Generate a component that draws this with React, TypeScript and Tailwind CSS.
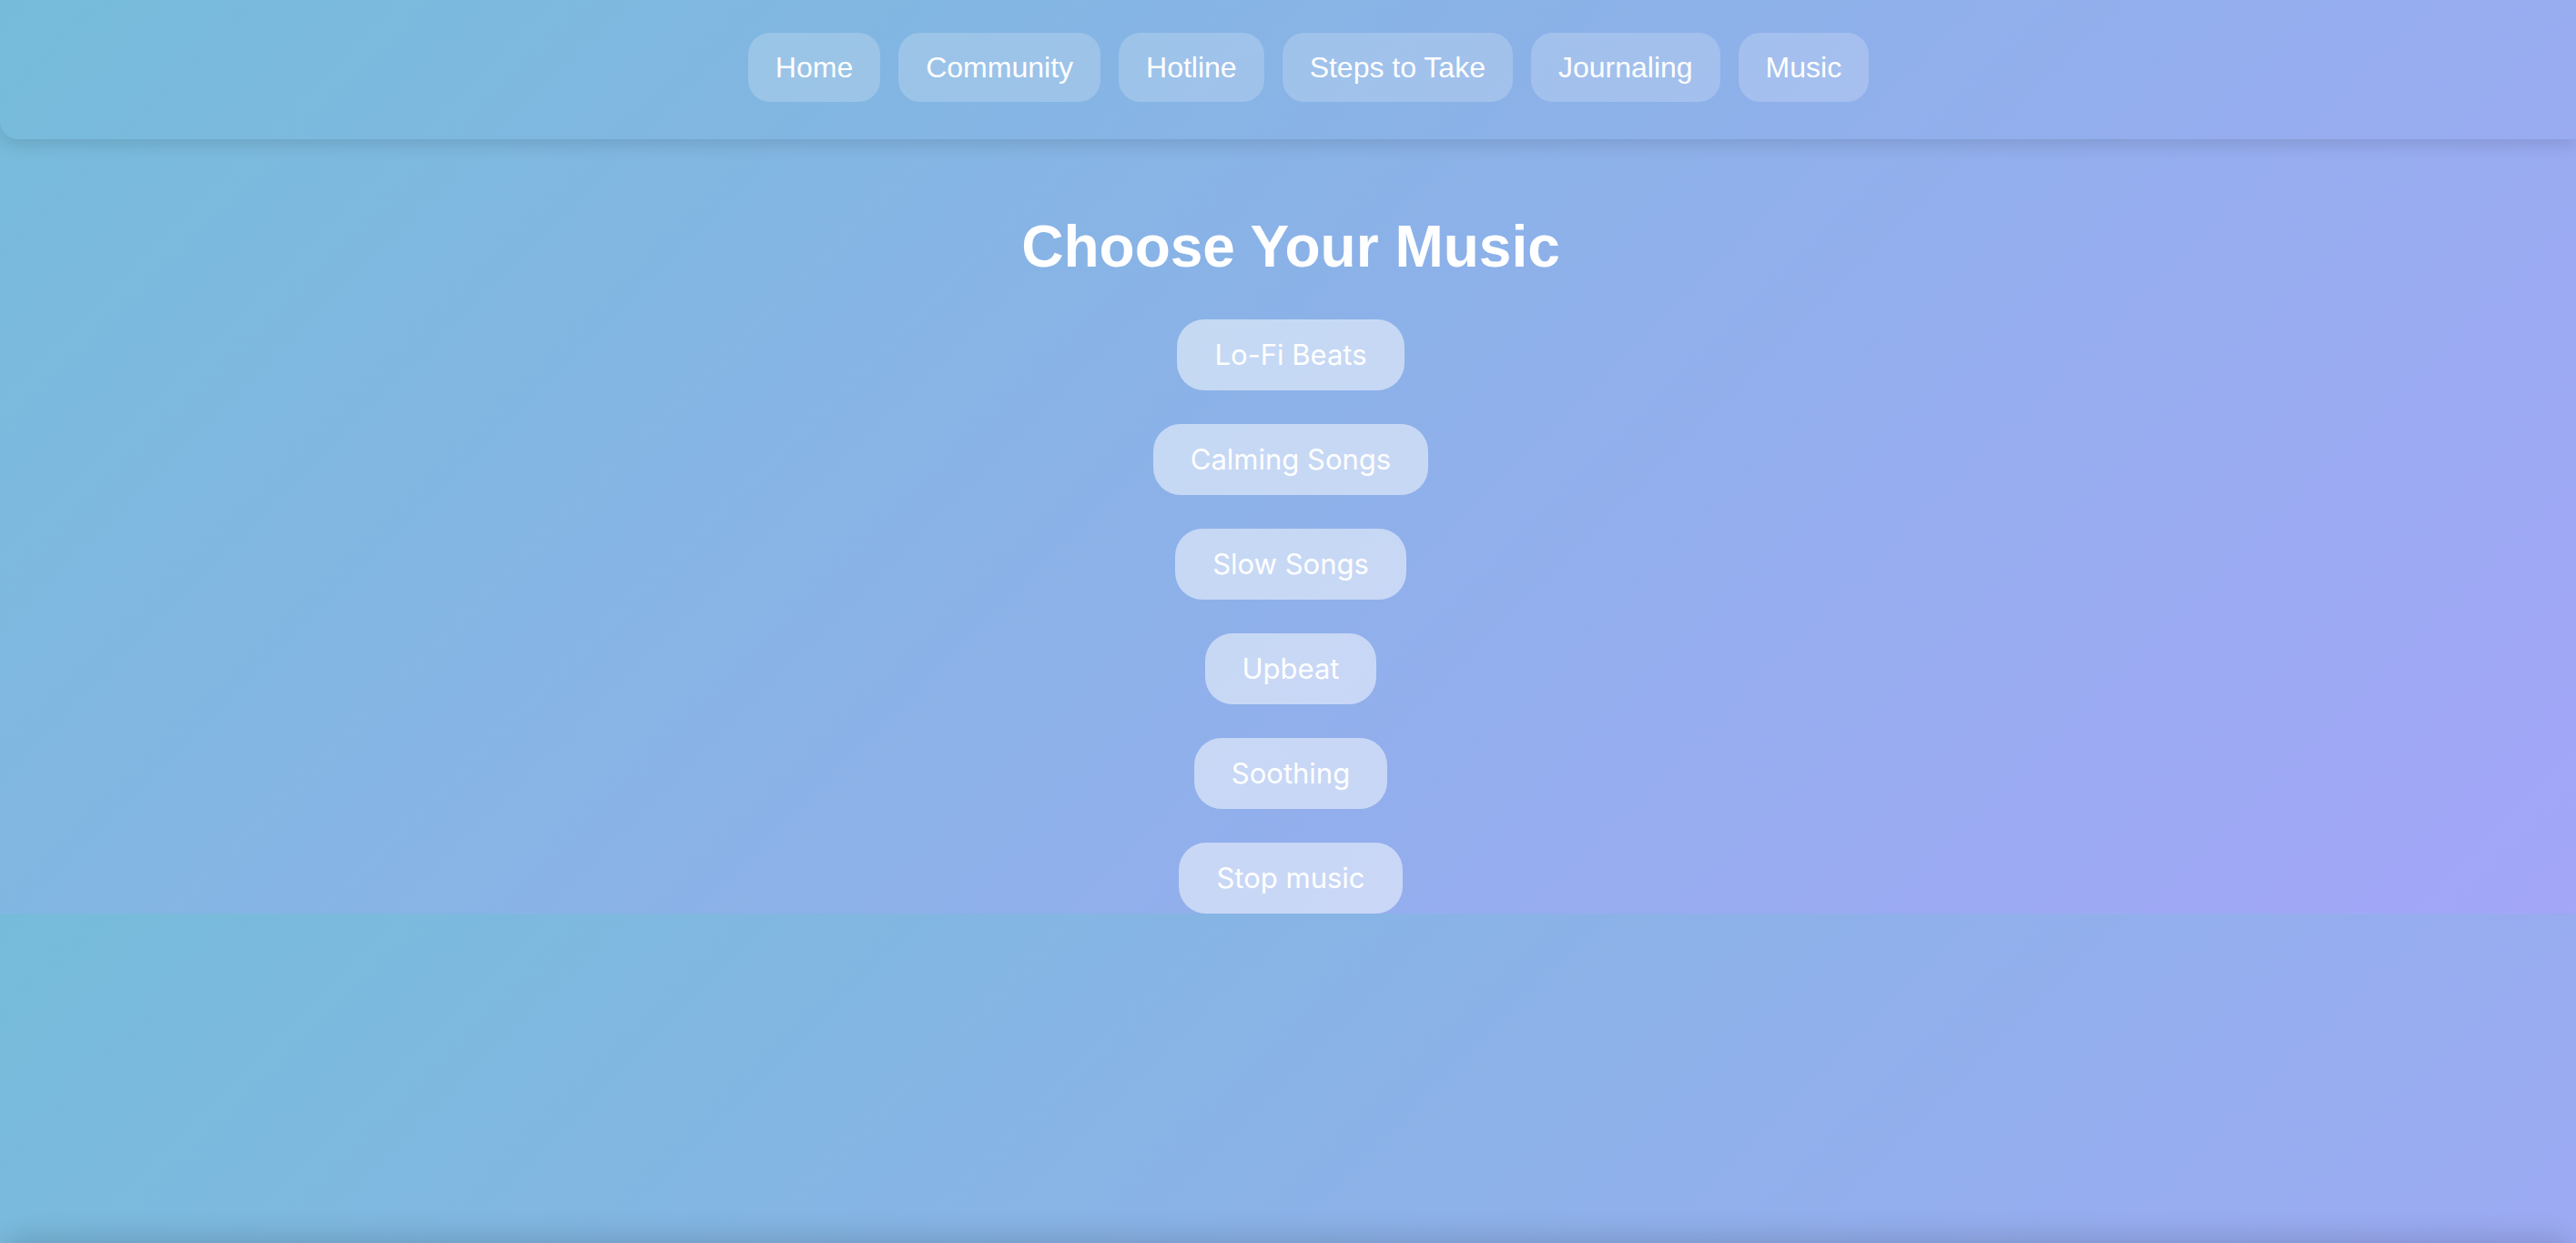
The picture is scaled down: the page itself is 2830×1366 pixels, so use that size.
import React from 'react';

const navItems = ['Home', 'Community', 'Hotline', 'Steps to Take', 'Journaling', 'Music'];
const tracks = ['Lo-Fi Beats', 'Calming Songs', 'Slow Songs', 'Upbeat', 'Soothing', 'Stop music'];

export default function App() {
  return (
    <div className="relative flex h-[1366px] flex-col overflow-hidden bg-[linear-gradient(135deg,#76bcda,#a4a6f8)] bg-[length:100%_1004px] bg-repeat font-['Liberation_Sans',Arial,sans-serif] text-white">
      {/* Header / nav */}
      <header className="rounded-bl-[20px] pt-[36px] pb-[41px] shadow-[0_6px_18px_rgba(0,0,0,0.12)]">
        <ul className="flex justify-center gap-[20px] pl-[45px]">
          {navItems.map(item => (
            <li key={item}>
              <a className="block rounded-[24px] bg-white/20 px-[30px] py-[20px] text-[32px] leading-[36px]">{item}</a>
            </li>
          ))}
        </ul>
      </header>

      {/* Music chooser */}
      <main className="flex flex-col items-center pt-[81px] pl-[6px]">
        <h1 className="mb-[43px] text-[64px] font-bold leading-[74px]">Choose Your Music</h1>
        <div className="flex flex-col items-center gap-[37px]">
          {tracks.map(track => (
            <button
              key={track}
              className="rounded-[30px] bg-white/50 px-[41px] py-[20px] font-['Inter',sans-serif] text-[31px] leading-[38px] text-white"
            >
              {track}
            </button>
          ))}
        </div>
      </main>

      <div className="flex-1" />
      <footer className="h-[60px] shrink-0 translate-y-[60px] rounded-t-[30px] shadow-[0_-8px_28px_rgba(0,0,0,0.14)]" />
    </div>
  );
}
